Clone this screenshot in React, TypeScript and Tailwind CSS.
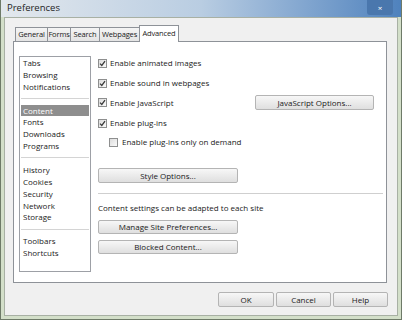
import React from "react";

const font = { fontFamily: '"Open Sans", "Noto Sans", sans-serif' };

function Check({ checked }: { checked: boolean }) {
  return (
    <div className="w-[9px] h-[9px] border border-[#8e8f8f] bg-gradient-to-br from-[#dcdcdc] to-[#fafafa] flex items-center justify-center shrink-0">
      {checked && (
        <svg width="7" height="7" viewBox="0 0 7 7">
          <path d="M1 3.6 L2.8 5.4 L6 1.2" stroke="#3a3a3a" strokeWidth="1.3" fill="none" />
        </svg>
      )}
    </div>
  );
}

function Btn({ label, className }: { label: string; className: string }) {
  return (
    <div
      className={
        "flex items-center justify-center border border-[#b4b4b4] rounded-[2px] bg-gradient-to-b from-[#f7f7f7] to-[#dfdfdf] text-[8px] text-[#1a1a1a] " +
        className
      }
    >
      {label}
    </div>
  );
}

function Item({ label, sel }: { label: string; sel?: boolean }) {
  return (
    <div
      className={
        "h-[11.875px] leading-[11.875px] pl-[2px] text-[8px] " +
        (sel ? "bg-[#8e8e8e] text-white" : "text-[#1a1a1a]")
      }
    >
      {label}
    </div>
  );
}

function Sep() {
  return (
    <div className="h-[11.875px] flex items-center">
      <div className="h-px w-full bg-[#d4d4d4]" />
    </div>
  );
}

function Tab({ label, w, sel }: { label: string; w: string; sel?: boolean }) {
  return (
    <div
      className={
        "flex items-center justify-center border border-b-0 border-[#8e9298] text-[7.5px] tracking-[-0.15px] text-[#1a1a1a] -ml-px " +
        w +
        (sel ? " h-[17px] bg-white relative top-px" : " h-[14px] bg-gradient-to-b from-[#f4f4f4] to-[#e4e4e4]")
      }
    >
      {label}
    </div>
  );
}

export default function App() {
  return (
    <div className="w-[402px] h-[320px] bg-[#d3dfc9] border-x border-b border-[#6e7a68] flex flex-col" style={font}>
      <div className="h-[17px] shrink-0 flex items-center justify-between bg-gradient-to-r from-[#e3e8ed] via-[#b9cde2] to-[#4f82bd]">
        <span className="pl-[6px] text-[9.5px] text-[#1e1e1e]">Preferences</span>
        <div className="w-[26px] h-[15px] self-start mr-[8px] bg-[#4a77ad] rounded-b-[3px] flex items-center justify-center text-white text-[8px] leading-none">
          ×
        </div>
      </div>
      <div className="flex-1 mx-[3px] mb-[3px] bg-[#f0f0f0] border border-[#a8b0a4] flex flex-col">
        <div className="flex items-end h-[22px] pl-[10px] mt-px">
          <Tab label="General" w="w-[33px] ml-0" />
          <Tab label="Forms" w="w-[24px]" />
          <Tab label="Search" w="w-[30px]" />
          <Tab label="Webpages" w="w-[41px]" />
          <Tab label="Advanced" w="w-[40px]" sel />
        </div>
        <div className="ml-[8px] mr-[10px] h-[242px] bg-white border border-[#8e9298] flex">
          <div className="ml-[5px] mt-[14px] w-[72px] h-[216px] border border-[#9da0a6] flex flex-col px-px">
            <Item label="Tabs" />
            <Item label="Browsing" />
            <Item label="Notifications" />
            <Sep />
            <Item label="Content" sel />
            <Item label="Fonts" />
            <Item label="Downloads" />
            <Item label="Programs" />
            <Sep />
            <Item label="History" />
            <Item label="Cookies" />
            <Item label="Security" />
            <Item label="Network" />
            <Item label="Storage" />
            <Sep />
            <Item label="Toolbars" />
            <Item label="Shortcuts" />
          </div>
          <div className="ml-[7px] mr-[3px] mt-[14px] flex-1 flex flex-col text-[8px] text-[#1a1a1a]">
            <div className="h-[14px] flex items-center gap-[3px]">
              <Check checked />
              <span>Enable animated images</span>
            </div>
            <div className="h-[14px] mt-[6px] flex items-center gap-[3px]">
              <Check checked />
              <span>Enable sound in webpages</span>
            </div>
            <div className="h-[15px] mt-[5px] flex items-center gap-[3px]">
              <Check checked />
              <span>Enable JavaScript</span>
              <Btn label="JavaScript Options..." className="ml-auto mr-[9px] w-[119px] h-[15px]" />
            </div>
            <div className="h-[14px] mt-[6px] flex items-center gap-[3px]">
              <Check checked />
              <span>Enable plug-ins</span>
            </div>
            <div className="h-[14px] mt-[5px] pl-[11px] flex items-center gap-[4px]">
              <Check checked={false} />
              <span>Enable plug-ins only on demand</span>
            </div>
            <Btn label="Style Options..." className="mt-[19px] w-[140px] h-[15px]" />
            <div className="mt-[10px] h-px bg-[#cfcfcf]" />
            <div className="mt-[7px] h-[14px] flex items-center">Content settings can be adapted to each site</div>
            <Btn label="Manage Site Preferences..." className="mt-[5px] w-[140px] h-[14px]" />
            <Btn label="Blocked Content..." className="mt-[6px] w-[140px] h-[14px]" />
          </div>
        </div>
        <div className="flex justify-end gap-[2px] mt-[9px] mr-[9px]">
          <Btn label="OK" className="w-[56px] h-[15px]" />
          <Btn label="Cancel" className="w-[55px] h-[15px]" />
          <Btn label="Help" className="w-[55px] h-[15px]" />
        </div>
      </div>
    </div>
  );
}
